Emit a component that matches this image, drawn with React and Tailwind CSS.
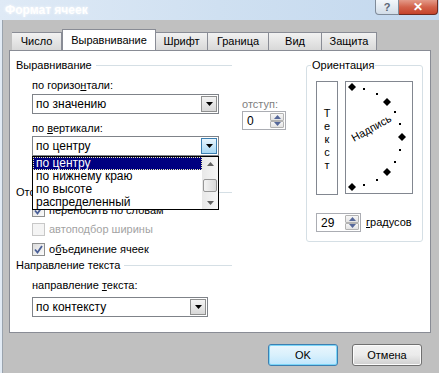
import React from "react";

function Arrow({ className = "" }) {
  return (
    <svg width="7" height="4" viewBox="0 0 7 4" className={className}>
      <path d="M0 0h7L3.5 4z" fill="currentColor" />
    </svg>
  );
}

function Select({ value, width, focused }) {
  return (
    <div className={`flex h-[20px] border border-[#7f8389] bg-white ${width}`}>
      <div className="flex flex-1 items-center pl-[3px] text-[12px] leading-none text-black">{value}</div>
      <div
        className={`m-[1px] flex w-[16px] items-center justify-center border ${
          focused
            ? "border-[#3c7fb1] bg-gradient-to-b from-[#e8f5fd] to-[#a7d8f5]"
            : "border-[#8e8f8f] bg-gradient-to-b from-[#f4f4f4] to-[#d8d8d8]"
        }`}
      >
        <Arrow className="text-black" />
      </div>
    </div>
  );
}

function Spin({ value, width }) {
  return (
    <div className={`flex h-[19px] border border-[#abadb3] bg-white ${width}`}>
      <div className="flex flex-1 items-center pl-[4px] text-[12px] leading-none text-black">{value}</div>
      <div className="m-[1px] flex w-[14px] flex-col">
        <div className="flex flex-1 items-center justify-center rounded-[1px] border border-[#b3b3b3] bg-gradient-to-b from-[#f7f7f7] to-[#e3e3e3]">
          <svg width="7" height="4" viewBox="0 0 7 4"><path d="M0 4h7L3.5 0z" fill="#56689a" /></svg>
        </div>
        <div className="flex flex-1 items-center justify-center rounded-[1px] border border-[#b3b3b3] bg-gradient-to-b from-[#f7f7f7] to-[#e3e3e3]">
          <svg width="7" height="4" viewBox="0 0 7 4"><path d="M0 0h7L3.5 4z" fill="#56689a" /></svg>
        </div>
      </div>
    </div>
  );
}

function Check({ checked, disabled, children, className = "" }) {
  return (
    <div className={`flex h-[13px] items-center gap-[4px] pl-[22px] ${className}`}>
      <div
        className={`flex h-[13px] w-[13px] items-center justify-center border ${
          disabled ? "border-[#c8c8c8] bg-[#f4f4f4]" : "border-[#8e8f8f] bg-gradient-to-br from-[#dcdcdc] to-[#fbfbfb]"
        }`}
      >
        {checked && (
          <svg width="9" height="9" viewBox="0 0 9 9">
            <path d="M1 4.5l2.5 3L8 1" fill="none" stroke="#4a5f97" strokeWidth="1.8" />
          </svg>
        )}
      </div>
      <span className={`text-[11px] leading-none ${disabled ? "text-[#a3a3a3]" : "text-black"}`}>{children}</span>
    </div>
  );
}

function Header({ children, className = "" }) {
  return (
    <div className={`flex h-[14px] w-[222px] items-center pl-[6px] ${className}`}>
      <span className="text-[11px] leading-none text-black">{children}</span>
      <div className="ml-[4px] h-px flex-1 bg-[#d5dfe5]" />
    </div>
  );
}

function Tab({ label, active, width }) {
  if (active)
    return (
      <div className={`-mb-px flex h-[22px] items-center justify-center border border-b-0 border-[#898c95] bg-white text-[11px] text-black ${width}`}>
        {label}
      </div>
    );
  return (
    <div className={`flex h-[18px] items-center justify-center border border-b-0 border-l-0 border-[#898c95] bg-gradient-to-b from-[#f2f2f2] to-[#d8d8d8] text-[11px] text-black ${width}`}>
      {label}
    </div>
  );
}

const dots = [
  [19, 8], [32, 13], [50, 31], [55, 43], [55, 69], [50, 81], [32, 99], [19, 104],
];
const diamonds = [
  [7, 6], [42, 21], [57, 56], [42, 91], [7, 106],
];

export default function App() {
  return (
    <div className="h-[373px] w-[439px] overflow-hidden bg-[#c0c0c0] font-['Liberation_Sans',Arial,sans-serif]">
      <div className="flex h-[20px] bg-gradient-to-r from-[#dfeaf6] via-[#cfe0f1] to-[#c3d8ee]">
        <div className="pl-[5px] pt-[3px] text-[12px] font-bold leading-[14px] text-white [text-shadow:0_0_3px_#ffffff]">
          Формат ячеек
        </div>
        <div className="ml-auto mr-[1px] flex h-[15px]">
          <div className="flex w-[24px] items-center justify-center rounded-bl-[4px] border border-t-0 border-[#7f8b99] bg-gradient-to-b from-[#f3f7fb] to-[#d2dde8] text-[11px] font-bold leading-none text-[#5a6675]">
            ?
          </div>
          <div className="flex w-[39px] items-center justify-center rounded-br-[4px] border border-l-0 border-t-0 border-[#6d2a20] bg-gradient-to-b from-[#e39a89] via-[#d2624b] to-[#c5432b] text-[12px] font-bold leading-none text-white">
            ✕
          </div>
        </div>
      </div>

      <div className="flex h-[353px]">
        <div className="w-[3px] border-r border-[#9aa3ad] bg-[#e2ebf5]" />
        <div className="flex flex-1 flex-col pl-[6px]">
          <div className="flex items-end pl-[3px] pt-[9px]">
            <Tab label="Число" width="w-[50px] border-l" />
            <Tab label="Выравнивание" active width="w-[94px]" />
            <Tab label="Шрифт" width="w-[52px]" />
            <Tab label="Граница" width="w-[61px]" />
            <Tab label="Вид" width="w-[53px]" />
            <Tab label="Защита" width="w-[55px]" />
          </div>

          <div className="flex h-[283px] w-[422px] border border-[#898c95] bg-white">
            <div className="flex w-[296px] flex-col">
              <Header className="mt-[7px]">Выравнивание</Header>
              <div className="flex">
                <div className="flex flex-col pl-[22px]">
                  <div className="mt-[6px] h-[14px] text-[11px] leading-[14px] text-black">
                    по горизо<u>н</u>тали:
                  </div>
                  <div className="mt-[2px]">
                    <Select value="по значению" width="w-[187px]" />
                  </div>
                  <div className="mt-[7px] h-[14px] text-[11px] leading-[14px] text-black">
                    по <u>в</u>ертикали:
                  </div>
                  <div className="relative mt-[1px]">
                    <Select value="по центру" width="w-[187px]" focused />
                    <div className="absolute left-0 top-[20px] z-10 flex h-[54px] w-[187px] border border-black bg-white">
                      <div className="flex flex-1 flex-col text-[12px] leading-[13px] text-black">
                        <div className="h-[13px] border border-dotted border-[#f0f0b0] bg-[#000080] pl-[2px] leading-[11px] text-white">
                          по центру
                        </div>
                        <div className="h-[13px] pl-[3px]">по нижнему краю</div>
                        <div className="h-[13px] pl-[3px]">по высоте</div>
                        <div className="h-[13px] pl-[3px]">распределенный</div>
                      </div>
                      <div className="flex w-[16px] flex-col items-center bg-gradient-to-r from-[#e8e8e8] to-[#f6f6f6]">
                        <div className="flex h-[13px] items-center">
                          <svg width="7" height="4" viewBox="0 0 7 4"><path d="M0 4h7L3.5 0z" fill="#606060" /></svg>
                        </div>
                        <div className="mt-[9px] h-[13px] w-[14px] rounded-[2px] border border-[#979797] bg-gradient-to-r from-[#f3f3f3] to-[#d9d9d9]" />
                        <div className="mt-auto flex h-[13px] items-center">
                          <svg width="7" height="4" viewBox="0 0 7 4"><path d="M0 0h7L3.5 4z" fill="#606060" /></svg>
                        </div>
                      </div>
                    </div>
                  </div>
                </div>
                <div className="ml-[23px] flex flex-col pt-[25px]">
                  <div className="h-[14px] text-[11px] leading-[14px] text-[#808080]">отступ:</div>
                  <Spin value="0" width="w-[44px]" />
                </div>
              </div>

              <Header className="mt-[29px]">Отображение</Header>
              <Check checked className="mt-[5px]">переносить по словам</Check>
              <Check disabled className="mt-[6px]">автоподбор ширины</Check>
              <Check checked className="mt-[7px]">
                о<u>б</u>ъединение ячеек
              </Check>

              <Header className="mt-[2px]">Направление текста</Header>
              <div className="mt-[6px] h-[14px] pl-[22px] text-[11px] leading-[14px] text-black">
                направление <u>т</u>екста:
              </div>
              <div className="mt-[5px] pl-[22px]">
                <Select value="по контексту" width="w-[176px] h-[19px]" />
              </div>
            </div>

            <fieldset className="mt-[7px] h-[184px] w-[116px] rounded-[3px] border border-[#d5dfe5] px-[9px]">
              <legend className="ml-[-5px] px-[1px] text-[11px] leading-[14px] text-black">Ориентация</legend>
              <div className="mt-[9px] flex gap-[7px]">
                <div className="flex h-[114px] w-[22px] flex-col items-center border border-[#828790] pt-[25px] text-[11px] leading-[13px] text-black">
                  <span>Т</span>
                  <span>е</span>
                  <span>к</span>
                  <span>с</span>
                  <span>т</span>
                </div>
                <div className="h-[113px] w-[68px] border border-[#828790]">
                  <svg width="66" height="111" viewBox="1 1 66 111">
                    {dots.map(([x, y]) => (
                      <rect key={`${x}-${y}`} x={x - 1} y={y - 1} width="2" height="2" fill="#000" />
                    ))}
                    {diamonds.map(([x, y]) => (
                      <path key={`${x}-${y}`} d={`M${x} ${y - 4}L${x + 4} ${y}L${x} ${y + 4}L${x - 4} ${y}z`} fill="#000" />
                    ))}
                    <text
                      x="9"
                      y="61"
                      transform="rotate(-29 9 61)"
                      fontSize="11"
                      fontFamily="Liberation Sans, Arial, sans-serif"
                      fill="#000"
                    >
                      Надпись
                    </text>
                  </svg>
                </div>
              </div>
              <div className="mt-[18px] flex items-center gap-[5px]">
                <Spin value="29" width="w-[45px]" />
                <span className="text-[11px] leading-none text-black">
                  <u>г</u>радусов
                </span>
              </div>
            </fieldset>
          </div>

          <div className="mt-[11px] flex justify-end gap-[14px] pr-[17px]">
            <div className="flex h-[22px] w-[70px] items-center justify-center rounded-[3px] border border-[#3c7fb1] bg-gradient-to-b from-[#eaf6fd] via-[#d9f0fc] to-[#bee6fd] text-[11px] text-black shadow-[inset_0_0_0_1px_#7cd6f8]">
              OK
            </div>
            <div className="flex h-[22px] w-[70px] items-center justify-center rounded-[3px] border border-[#707070] bg-gradient-to-b from-[#f2f2f2] via-[#ebebeb] to-[#cfcfcf] text-[11px] text-black shadow-[inset_0_0_0_1px_#fcfcfc]">
              Отмена
            </div>
          </div>
        </div>
      </div>
    </div>
  );
}
